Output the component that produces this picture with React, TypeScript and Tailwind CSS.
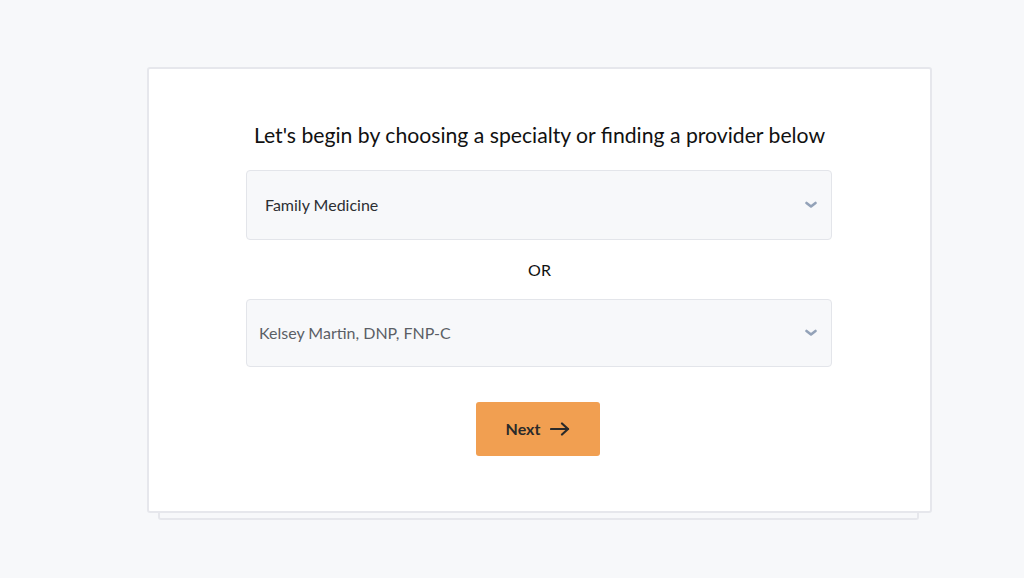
function Chevron() {
  return (
    <svg width="12" height="8" viewBox="0 0 12 8" fill="none" stroke="#93a2b8" strokeWidth="2.6" strokeLinecap="round" strokeLinejoin="round">
      <path d="M1.5 2 6 5.5 10.5 2" />
    </svg>
  );
}

function SelectBox({ label, padLeft, muted }: { label: string; padLeft: string; muted?: boolean }) {
  return (
    <div
      className={`flex items-center justify-between h-full w-full rounded-[4px] border border-[#e3e5ea] bg-[#f7f8fa] ${padLeft} pr-[14px]`}
    >
      <span className={`text-[16px] ${muted ? "text-[#5b5f66]" : "text-[#2c2f33]"}`}>{label}</span>
      <Chevron />
    </div>
  );
}

export default function App() {
  return (
    <div
      className="min-h-[578px] w-full bg-[#f7f8fa] pt-[67px] pl-[147px]"
      style={{ fontFamily: '"Lato", "Noto Sans", sans-serif' }}
    >
      <div className="w-[785px]">
        {/* CARD */}
        <div className="relative z-10 h-[446px] rounded-[3px] border-2 border-[#e6e7ec] bg-white flex flex-col items-center">
          <h1 className="mt-[52px] text-[21.2px] text-[#111] leading-[28px]">
            Let's begin by choosing a specialty or finding a provider below
          </h1>

          <div className="mt-[21px] mr-[1px] w-[586px] h-[70px]">
            <SelectBox label="Family Medicine" padLeft="pl-[18px]" />
          </div>

          <div className="mt-[20px] text-[16px] text-[#111] leading-[20px]">OR</div>

          <div className="mt-[19px] mr-[1px] w-[586px] h-[68px]">
            <SelectBox label="Kelsey Martin, DNP, FNP-C" padLeft="pl-[12px]" muted />
          </div>

          <button className="mt-[35px] mr-[3px] w-[124px] h-[54px] rounded-[3px] bg-[#f19f51] flex items-center justify-center gap-[10px] text-[16px] font-bold text-[#2a2a2a]">
            Next
            <svg width="20" height="14" viewBox="0 0 20 14" fill="none" stroke="#2a2a2a" strokeWidth="2.2" strokeLinecap="round" strokeLinejoin="round">
              <path d="M1 7h17" />
              <path d="M12 1.5 18 7l-6 5.5" />
            </svg>
          </button>
        </div>

        {/* BACK CARD EDGE */}
        <div className="ml-[11px] mr-[13px] h-[9px] -mt-[2px] rounded-b-[3px] border-2 border-t-0 border-[#e6e7ec] bg-[#f7f8fa]" />
      </div>
    </div>
  );
}
